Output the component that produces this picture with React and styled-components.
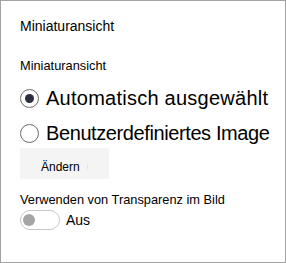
import styled, { createGlobalStyle } from "styled-components";

const GlobalStyle = createGlobalStyle`
  html, body {
    margin: 0;
    padding: 0;
    background: #ffffff;
  }
  body {
    font-family: "Liberation Sans", Arial, sans-serif;
    color: #000000;
  }
`;

const Panel = styled.div`
  box-sizing: border-box;
  width: 286px;
  height: 263px;
  border: 1px solid #a3a3a3;
  padding: 16px 10px 0 19px;
  display: flex;
  flex-direction: column;
  align-items: flex-start;
`;

const Title = styled.div`
  font-size: 14px;
  line-height: 18px;
`;

const Label = styled.div`
  font-size: 12.8px;
  line-height: 16px;
  margin-top: ${props => props.top || 0}px;
`;

const RadioGroup = styled.div`
  display: flex;
  flex-direction: column;
  gap: 11px;
  margin-top: 12px;
`;

const RadioRow = styled.label`
  display: flex;
  align-items: center;
  gap: 7px;
  font-size: 20px;
  line-height: 24px;
  white-space: nowrap;
  letter-spacing: ${props => props.spacing || 0}px;
`;

const RadioCircle = styled.span`
  box-sizing: border-box;
  width: 19px;
  height: 19px;
  border-radius: 50%;
  border: 1px solid #6b6b6b;
  display: flex;
  align-items: center;
  justify-content: center;
  flex: 0 0 auto;

  &::after {
    content: "";
    width: 9px;
    height: 9px;
    border-radius: 50%;
    background: #2b2e3f;
    display: ${props => (props.checked ? "block" : "none")};
  }
`;

const Button = styled.button`
  box-sizing: border-box;
  width: 89px;
  height: 31px;
  margin-top: 3px;
  border: none;
  border-radius: 2px;
  background: #f4f4f4;
  font-family: "Liberation Sans", Arial, sans-serif;
  font-size: 12px;
  color: #000000;
  display: flex;
  align-items: center;
  padding: 6px 0 0 21px;
  gap: 7px;
`;

const Tick = styled.span`
  width: 1px;
  height: 4px;
  background: #e2e2e2;
`;

const ToggleRow = styled.div`
  display: flex;
  align-items: center;
  gap: 6px;
  margin-top: 2px;
`;

const Toggle = styled.span`
  box-sizing: border-box;
  width: 40px;
  height: 20px;
  border-radius: 10px;
  border: 1px solid #c6c6c6;
  display: flex;
  align-items: center;
  padding-left: 2px;

  &::before {
    content: "";
    width: 12px;
    height: 12px;
    border-radius: 50%;
    background: #a5a5a5;
  }
`;

const ToggleText = styled.span`
  font-size: 14px;
  line-height: 20px;
`;

export default function App() {
  return (
    <>
      <GlobalStyle />
      <Panel>
        <Title>Miniaturansicht</Title>
        <Label top={23}>Miniaturansicht</Label>
        <RadioGroup>
          <RadioRow spacing={0.25}>
            <RadioCircle checked />
            Automatisch ausgewählt
          </RadioRow>
          <RadioRow spacing={-0.4}>
            <RadioCircle />
            Benutzerdefiniertes Image
          </RadioRow>
        </RadioGroup>
        <Button>
          Ändern
          <Tick />
        </Button>
        <Label top={13}>Verwenden von Transparenz im Bild</Label>
        <ToggleRow>
          <Toggle />
          <ToggleText>Aus</ToggleText>
        </ToggleRow>
      </Panel>
    </>
  );
}
